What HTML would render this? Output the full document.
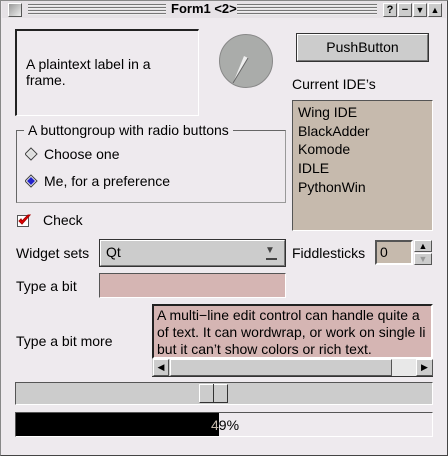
<!DOCTYPE html>
<html><head><style>
*{margin:0;padding:0;box-sizing:border-box}
body{width:448px;height:456px;background:#dcd8dc;font-family:"Liberation Sans",sans-serif;font-size:14px;color:#000;position:relative;overflow:hidden}
.a{position:absolute}
.t{position:absolute;white-space:nowrap;line-height:16px}
.grv{background:repeating-linear-gradient(#777 0 1px,#eee 1px 2px,transparent 2px 3px)}
.tb{width:14px;height:14px;border:1px solid;border-color:#fff #555 #555 #fff;background:#ccc;font-size:11px;font-weight:bold;text-align:center;line-height:12px}
.sunk{border:1px solid;border-color:#555 #fff #fff #555}
.rais{border:1px solid;border-color:#fff #555 #555 #fff}
</style></head><body>
<div class="a" style="left:0;top:0;width:448px;height:456px;border:1px solid #888;border-right-color:#444;border-bottom-color:#444;background:#eeeaee"></div>
<div class="a" style="left:2px;top:1px;width:444px;height:17px;background:#e6e2e6"></div>
<div class="a tb" style="left:8px;top:3px;background:linear-gradient(135deg,#999,#eee)"></div>
<div class="a grv" style="left:28px;top:4px;width:138px;height:11px"></div>
<div class="a grv" style="left:237px;top:4px;width:140px;height:11px"></div>
<div class="t" style="left:171px;top:1px;font-weight:bold;font-size:13px">Form1 &lt;2&gt;</div>
<div class="a tb" style="left:383px;top:3px">?</div>
<div class="a tb" style="left:398px;top:3px">−</div>
<div class="a tb" style="left:413px;top:3px;font-size:9px">▼</div>
<div class="a tb" style="left:428px;top:3px;font-size:9px">▲</div>

<div class="a" style="left:15px;top:29px;width:184px;height:87px;border:1px solid;border-color:#222 #fff #fff #222;border-left-width:2px;border-top-width:2px"></div>
<div class="t" style="left:26px;top:56px">A plaintext label in a<br>frame.</div>

<div class="a" style="left:219px;top:34px;width:54px;height:54px;border-radius:50%;background:#aaacaa;border:1px solid #888"></div>
<svg class="a" style="left:219px;top:34px" width="54" height="54"><polygon points="14,49 25,22 29,24" fill="#eee"/><line x1="14" y1="49" x2="29" y2="24" stroke="#666"/></svg>

<div class="a" style="left:296px;top:33px;width:133px;height:29px;border:1px solid #333;background:#cccccc"><div style="border:1px solid;border-color:#fff #777 #777 #fff;height:27px;text-align:center;line-height:25px">PushButton</div></div>
<div class="t" style="left:292px;top:76px">Current IDE’s</div>
<div class="a sunk" style="left:292px;top:100px;width:141px;height:131px;background:#c6baad;padding:2px 0 0 5px;line-height:18.7px">Wing IDE<br>BlackAdder<br>Komode<br>IDLE<br>PythonWin</div>

<div class="a" style="left:16px;top:130px;width:270px;height:73px;border:1px solid #666;border-right-color:#999;border-bottom-color:#999"></div>
<div class="t" style="left:24px;top:122px;background:#eeeaee;padding:0 4px">A buttongroup with radio buttons</div>
<svg class="a" style="left:25px;top:147px" width="14" height="14"><polygon points="6,1 12,7 6,13 0,7" fill="#eee" stroke="#444"/><polygon points="6,3 10,7 6,11 2,7" fill="#ddd"/></svg>
<div class="t" style="left:44px;top:146px">Choose one</div>
<svg class="a" style="left:25px;top:174px" width="14" height="14"><polygon points="6,1 12,7 6,13 0,7" fill="#eee" stroke="#444"/><polygon points="6,3 10,7 6,11 2,7" fill="#22c"/></svg>
<div class="t" style="left:44px;top:173px">Me, for a preference</div>

<svg class="a" style="left:17px;top:212px" width="18" height="16"><rect x="0.5" y="3.5" width="11" height="11" fill="#fff" stroke="#555"/><path d="M2 9 L5 12 L13 3 L11 3 L5 9 L4 7Z" fill="#e00" stroke="#a00" stroke-width="1"/></svg>
<div class="t" style="left:43px;top:212px">Check</div>

<div class="t" style="left:16px;top:245px">Widget sets</div>
<div class="a" style="left:99px;top:239px;width:187px;height:28px;border:1px solid #333;background:#ccc"><div style="border:1px solid;border-color:#fff #777 #777 #fff;height:26px;padding-left:5px;line-height:22px">Qt</div></div>
<div class="t" style="left:265px;top:243px;font-size:10px;color:#444">▼</div>
<div class="a" style="left:266px;top:258px;width:11px;height:2px;background:#444"></div>
<div class="t" style="left:292px;top:245px">Fiddlesticks</div>
<div class="a sunk" style="left:375px;top:240px;width:38px;height:25px;background:#c6baad;border-width:2px;padding-left:3px;line-height:21px">0</div>
<div class="a rais" style="left:414px;top:240px;width:18px;height:12px;background:#ccc;font-size:9px;text-align:center;line-height:10px">▲</div>
<div class="a rais" style="left:414px;top:253px;width:18px;height:12px;background:#ccc;font-size:9px;text-align:center;line-height:10px;color:#999">▼</div>

<div class="t" style="left:16px;top:278px">Type a bit</div>
<div class="a sunk" style="left:99px;top:273px;width:187px;height:25px;background:#d5b5b3"></div>

<div class="t" style="left:16px;top:333px">Type a bit more</div>
<div class="a" style="left:152px;top:304px;width:281px;height:55px;border:2px solid;border-color:#222 #fff #fff #222;background:#d5b5b3;overflow:hidden;padding:1px 0 0 3px;line-height:17px;white-space:nowrap">A multi−line edit control can handle quite a<br>of text. It can wordwrap, or work on single li<br>but it can’t show colors or rich text.</div>
<div class="a" style="left:152px;top:359px;width:281px;height:18px;background:#ccc;border-bottom:1px solid #333"></div>
<div class="a" style="left:392px;top:359px;width:24px;height:17px;background:#e8e8e8"></div>
<div class="a rais" style="left:153px;top:359px;width:16px;height:17px;background:#ccc;font-size:9px;text-align:center;line-height:15px">◀</div>
<div class="a rais" style="left:170px;top:359px;width:222px;height:17px;background:#ccc"></div>
<div class="a rais" style="left:416px;top:359px;width:17px;height:17px;background:#ccc;font-size:9px;text-align:center;line-height:15px">▶</div>

<div class="a" style="left:15px;top:382px;width:418px;height:23px;border:1px solid;border-color:#555 #fff #fff #555;background:#ccc"></div>
<div class="a" style="left:199px;top:384px;width:29px;height:19px;border:1px solid;border-color:#fff #333 #333 #fff;background:#ccc"></div>
<div class="a" style="left:213px;top:384px;width:1px;height:19px;background:#333"></div>

<div class="a" style="left:15px;top:412px;width:418px;height:25px;border:1px solid;border-color:#555 #fff #fff #555;background:#eeeaee"></div>
<div class="a" style="left:16px;top:413px;width:203px;height:23px;background:#000"></div>
<div class="t" style="left:211px;top:417px;color:#000;width:30px"><span style="color:#c6baad">4</span>9%</div>
</body></html>
